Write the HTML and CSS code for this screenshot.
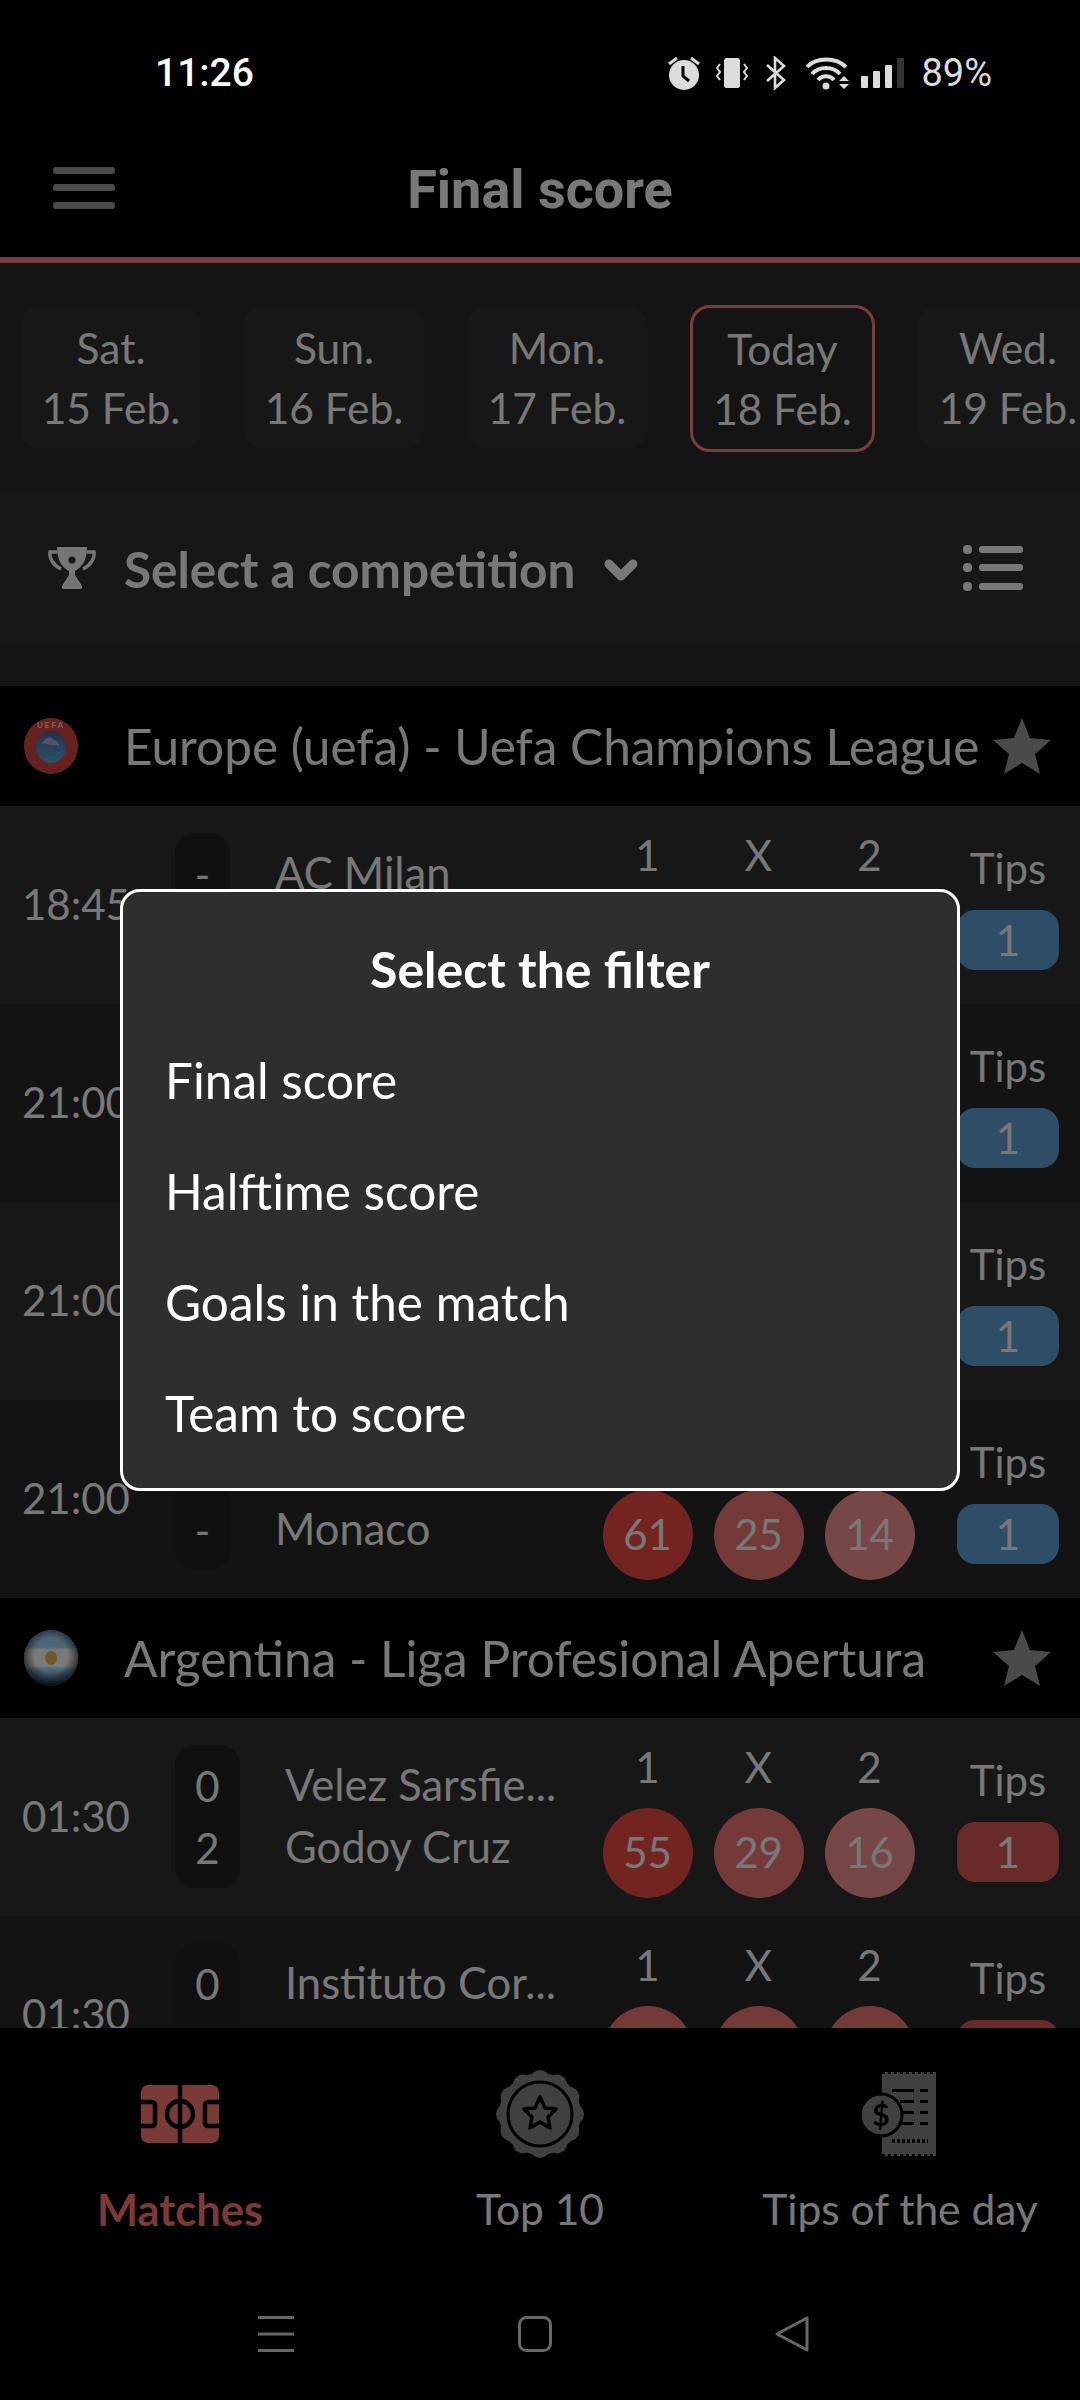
FILE: index.html
```html
<!DOCTYPE html>
<html lang="en">
<head>
    <meta charset="UTF-8">
    <meta name="viewport" content="width=device-width, initial-scale=1.0">
    <title>Final score</title>
    <link rel="stylesheet" href="styles.css">
</head>
<body>
<div class="screen">
    <!-- system status bar, stays above the scrim -->
    <div class="status-bar">
        <span class="clock">11:26</span>
        <div class="status-icons">
            <svg class="ic-alarm" width="32" height="34" viewBox="0 0 32 34"><path d="M1 8 9 2M31 8 23 2" stroke="#dcdcdc" stroke-width="3" fill="none"/><circle cx="16" cy="19" r="15" fill="#dcdcdc"/><path d="M15 10v10l6 5" stroke="#000" stroke-width="3" fill="none"/></svg>
            <svg class="ic-vibrate" width="32" height="30" viewBox="0 0 32 30"><rect x="8" y="0" width="16" height="30" rx="2.5" fill="#dcdcdc"/><path d="M4 6 1 10l3 4-3 4 3 4M28 6l3 4-3 4 3 4-3 4" stroke="#dcdcdc" stroke-width="2" fill="none"/></svg>
            <svg class="ic-bt" width="20" height="34" viewBox="0 0 20 34"><path d="M1 9 18 24 9 32V2l9 8L1 25" stroke="#dcdcdc" stroke-width="2.6" fill="none"/></svg>
            <svg class="ic-wifi" width="44" height="34" viewBox="0 0 44 34"><path d="M1 11C10 1 30 1 40 11M6 18C13 10 27 10 34 18M12 24c4-5 12-5 16 0" stroke="#dcdcdc" stroke-width="4" fill="none"/><circle cx="20" cy="30" r="3.5" fill="#dcdcdc"/><path d="M33 25l5-5 5 5zM33 28l5 5 5-5z" fill="#dcdcdc"/></svg>
            <svg class="ic-signal" width="44" height="30" viewBox="0 0 44 30"><rect x="0" y="18" width="7" height="12" rx="1" fill="#dcdcdc"/><rect x="12" y="13" width="7" height="17" rx="1" fill="#dcdcdc"/><rect x="24" y="7" width="7" height="23" rx="1" fill="#dcdcdc"/><rect x="36" y="0" width="7" height="30" rx="1" fill="#333"/></svg>
            <span class="battery">89%</span>
        </div>
    </div>

    <header class="app-bar">
        <svg class="burger" width="62" height="42" viewBox="0 0 62 42"><rect width="62" height="7" rx="3" fill="#949494"/><rect y="17" width="62" height="7" rx="3" fill="#949494"/><rect y="35" width="62" height="7" rx="3" fill="#949494"/></svg>
        <h1 class="app-title">Final score</h1>
    </header>

    <div class="dates">
        <div class="date">Sat.<br>15 Feb.</div>
        <div class="date">Sun.<br>16 Feb.</div>
        <div class="date">Mon.<br>17 Feb.</div>
        <div class="date today">Today<br>18 Feb.</div>
        <div class="date">Wed.<br>19 Feb.</div>
    </div>

    <div class="filter-bar">
        <svg class="trophy" width="48" height="42" viewBox="0 0 48 42"><path d="M9 0H39C39 14 34 20 27 24V28L34 39Q35 42 32 42H16Q13 42 14 39L21 28V24C14 20 9 14 9 0Z" fill="#ececec"/><circle cx="24" cy="13" r="3.5" fill="#2e2e2e"/><path d="M9 5H2C1 11 5 18 13 22M39 5H46C47 11 43 18 35 22" fill="none" stroke="#ececec" stroke-width="3.5"/></svg>
        <span class="filter-label">Select a competition</span>
        <svg class="chevron" width="34" height="24" viewBox="0 0 34 24"><path d="M5 6 17 18 29 6" fill="none" stroke="#f0f0f0" stroke-width="9" stroke-linecap="round" stroke-linejoin="round"/></svg>
        <svg class="list-icon" width="60" height="46" viewBox="0 0 60 46"><g fill="#f0f0f0"><rect y="0" width="9" height="9" rx="4"/><rect y="18" width="9" height="9" rx="4"/><rect y="37" width="9" height="9" rx="4"/><rect x="16" y="1" width="44" height="7" rx="3"/><rect x="16" y="19" width="44" height="7" rx="3"/><rect x="16" y="38" width="44" height="7" rx="3"/></g></svg>
    </div>

    <main class="matches">
        <section class="league">
            <svg class="league-logo" width="54" height="56" viewBox="0 0 54 56">
                <defs><linearGradient id="globe" x1="0" y1="0" x2="0" y2="1"><stop offset="0" stop-color="#4a5c98"/><stop offset="1" stop-color="#50a8d8"/></linearGradient></defs>
                <ellipse cx="27" cy="28" rx="27" ry="28" fill="#cc4440"/>
                <ellipse cx="27" cy="29" rx="15" ry="16" fill="url(#globe)"/>
                <path d="M17 26c4-6 9-8 12-5 3 2 7 3 6 7-3-2-6 0-9-1-3-1-5-2-9-1z" fill="#a0a8d0"/>
                <text class="uefa-text" x="27" y="10" text-anchor="middle">UEFA</text>
            </svg>
            <span class="league-name">Europe (uefa) - Uefa Champions League</span>
            <svg class="star" width="60" height="56" viewBox="0 0 60 56"><path d="M30 0l8 20 21 2-16 14 5 20-18-11-18 11 5-20L1 22l21-2z" fill="#949494"/></svg>
        </section>

        <article class="match">
            <div class="time">18:45</div>
            <div class="score narrow"><span>-</span></div>
            <div class="teams"><span>AC Milan</span></div>
            <div class="odds">
                <span>1</span><span>X</span><span>2</span>
            </div>
            <div class="tips"><span>Tips</span><b class="tip blue">1</b></div>
        </article>
        <article class="match alt">
            <div class="time">21:00</div>
            <div class="score-gap"></div>
            <div class="odds"></div>
            <div class="tips"><span>Tips</span><b class="tip blue">1</b></div>
        </article>
        <article class="match">
            <div class="time">21:00</div>
            <div class="score-gap"></div>
            <div class="odds"></div>
            <div class="tips"><span>Tips</span><b class="tip blue">1</b></div>
        </article>
        <article class="match alt">
            <div class="time">21:00</div>
            <div class="score narrow"><span></span><span>-</span></div>
            <div class="teams"><span>&nbsp;</span><span>Monaco</span></div>
            <div class="odds">
                <span>1</span><span>X</span><span>2</span>
                <i class="pct high">61</i><i class="pct mid">25</i><i class="pct low">14</i>
            </div>
            <div class="tips"><span>Tips</span><b class="tip blue">1</b></div>
        </article>

        <section class="league">
            <svg class="league-logo" width="54" height="56" viewBox="0 0 54 56">
                <defs>
                    <linearGradient id="arg" x1="0" y1="0" x2="0" y2="1"><stop offset="0" stop-color="#8fc4ee"/><stop offset=".3" stop-color="#9cccf0"/><stop offset=".36" stop-color="#f4f4f4"/><stop offset=".64" stop-color="#f4f4f4"/><stop offset=".7" stop-color="#9cccf0"/><stop offset="1" stop-color="#3a6a90"/></linearGradient>
                    <radialGradient id="shade" cx="50%" cy="45%" r="52%"><stop offset=".6" stop-color="#000" stop-opacity="0"/><stop offset="1" stop-color="#000" stop-opacity=".6"/></radialGradient>
                </defs>
                <ellipse cx="27" cy="28" rx="27" ry="28" fill="url(#arg)"/>
                <ellipse cx="27" cy="28" rx="6" ry="7" fill="#e0b050"/>
                <ellipse cx="27" cy="28" rx="27" ry="28" fill="url(#shade)"/>
            </svg>
            <span class="league-name">Argentina - Liga Profesional Apertura</span>
            <svg class="star" width="60" height="56" viewBox="0 0 60 56"><path d="M30 0l8 20 21 2-16 14 5 20-18-11-18 11 5-20L1 22l21-2z" fill="#949494"/></svg>
        </section>

        <article class="match">
            <div class="time">01:30</div>
            <div class="score"><span>0</span><span>2</span></div>
            <div class="teams"><span>Velez Sarsfie...</span><span>Godoy Cruz</span></div>
            <div class="odds">
                <span>1</span><span>X</span><span>2</span>
                <i class="pct high">55</i><i class="pct mid">29</i><i class="pct low">16</i>
            </div>
            <div class="tips"><span>Tips</span><b class="tip red">1</b></div>
        </article>
        <article class="match alt">
            <div class="time">01:30</div>
            <div class="score"><span>0</span></div>
            <div class="teams"><span>Instituto Cor...</span></div>
            <div class="odds">
                <span>1</span><span>X</span><span>2</span>
                <i class="pct mid"></i><i class="pct mid"></i><i class="pct mid"></i>
            </div>
            <div class="tips"><span>Tips</span><b class="tip red">1</b></div>
        </article>
    </main>

    <nav class="tabs">
        <div class="tab active">
            <div class="tab-icon">
                <svg width="78" height="58" viewBox="0 0 78 58"><rect width="78" height="58" rx="7" fill="#f47470"/><g fill="none" stroke="#000" stroke-width="4.5"><path d="M39 0v58"/><circle cx="39" cy="29" r="13"/><path d="M0 17h11a3 3 0 0 1 3 3v18a3 3 0 0 1-3 3H0M78 17H67a3 3 0 0 0-3 3v18a3 3 0 0 0 3 3h11"/></g></svg>
            </div>
            <span>Matches</span>
        </div>
        <div class="tab">
            <div class="tab-icon">
                <svg width="90" height="88" viewBox="0 0 90 88">
                    <g fill="#808080">
                        <circle cx="45" cy="44" r="41"/>
                        <circle cx="45" cy="10" r="10"/><circle cx="45" cy="10" r="10" transform="rotate(30 45 44)"/><circle cx="45" cy="10" r="10" transform="rotate(60 45 44)"/><circle cx="45" cy="10" r="10" transform="rotate(90 45 44)"/>
                        <circle cx="45" cy="10" r="10" transform="rotate(120 45 44)"/><circle cx="45" cy="10" r="10" transform="rotate(150 45 44)"/><circle cx="45" cy="10" r="10" transform="rotate(180 45 44)"/><circle cx="45" cy="10" r="10" transform="rotate(210 45 44)"/>
                        <circle cx="45" cy="10" r="10" transform="rotate(240 45 44)"/><circle cx="45" cy="10" r="10" transform="rotate(270 45 44)"/><circle cx="45" cy="10" r="10" transform="rotate(300 45 44)"/><circle cx="45" cy="10" r="10" transform="rotate(330 45 44)"/>
                    </g>
                    <circle cx="45" cy="44" r="32" fill="none" stroke="#000" stroke-width="3"/>
                    <path d="M45 27l5 11 11 1-8 8 2 11-10-6-10 6 2-11-8-8 11-1z" fill="none" stroke="#000" stroke-width="3.5" stroke-linejoin="round"/>
                </svg>
            </div>
            <span>Top 10</span>
        </div>
        <div class="tab">
            <div class="tab-icon">
                <svg width="76" height="84" viewBox="0 0 76 84">
                    <rect x="20" y="0" width="54" height="84" fill="#808080"/>
                    <path d="M20 1h54M20 83h54" stroke="#000" stroke-width="2" stroke-dasharray="3 3"/>
                    <g fill="#000"><rect x="30" y="17" width="22" height="3"/><rect x="58" y="17" width="8" height="3"/><rect x="38" y="28" width="14" height="3"/><rect x="58" y="28" width="8" height="3"/><rect x="38" y="39" width="14" height="3"/><rect x="58" y="39" width="8" height="3"/><rect x="38" y="50" width="14" height="3"/><rect x="58" y="50" width="8" height="3"/></g>
                    <path d="M30 69h36" stroke="#000" stroke-width="3.5" stroke-dasharray="3 2"/>
                    <circle cx="19" cy="43" r="21" fill="#808080" stroke="#000" stroke-width="3"/>
                    <text class="dollar" x="19" y="54" text-anchor="middle">$</text>
                </svg>
            </div>
            <span>Tips of the day</span>
        </div>
    </nav>

    <div class="sys-nav">
        <svg width="36" height="36" viewBox="0 0 36 36"><path d="M0 1.5h36M0 18h36M0 34.5h36" stroke="#cfcfcf" stroke-width="3"/></svg>
        <svg width="34" height="36" viewBox="0 0 34 36"><rect x="1.5" y="1.5" width="31" height="33" rx="7" fill="none" stroke="#cfcfcf" stroke-width="3"/></svg>
        <svg width="34" height="36" viewBox="0 0 34 36"><path d="M32 2v32L2 18z" fill="none" stroke="#cfcfcf" stroke-width="3" stroke-linejoin="round"/></svg>
    </div>

    <div class="scrim">
        <div class="dialog">
            <h2 class="dialog-title">Select the filter</h2>
            <div class="dialog-item">Final score</div>
            <div class="dialog-item">Halftime score</div>
            <div class="dialog-item">Goals in the match</div>
            <div class="dialog-item">Team to score</div>
        </div>
    </div>
</div>
</body>
</html>
```

FILE: styles.css
```css
* {
    box-sizing: border-box;
}
body {
    margin: 0;
    background: #000;
    font-family: Lato, "Liberation Sans", sans-serif;
    color: #f0f0f0;
}
.screen {
    position: relative;
    width: 1080px;
    height: 2400px;
    display: flex;
    flex-direction: column;
    overflow: hidden;
    background: #282828;
}

/* status bar */
.status-bar {
    position: relative;
    z-index: 3;
    height: 100px;
    flex: none;
    padding: 50px 88px 0 155px;
    display: flex;
    justify-content: space-between;
    align-items: flex-start;
    background: #000;
    font-family: Roboto, sans-serif;
}
.clock {
    font-size: 39px;
    font-weight: 500;
    line-height: 46px;
    color: #fff;
}
.status-icons {
    display: flex;
    align-items: center;
    height: 46px;
    color: #dcdcdc;
}
.ic-vibrate {
    margin-left: 16px;
}
.ic-bt {
    margin-left: 18px;
}
.ic-wifi {
    margin-left: 20px;
}
.ic-signal {
    margin-left: 11px;
}
.battery {
    margin-left: 16px;
    font-size: 38px;
    line-height: 46px;
}

/* app bar */
.app-bar {
    height: 163px;
    flex: none;
    padding-left: 53px;
    display: flex;
    align-items: flex-start;
    background: #000;
    border-bottom: 6px solid #f47878;
}
.burger {
    margin-top: 67px;
}
.app-title {
    flex: 1;
    margin: 60px 115px 0 0;
    font-family: Roboto, sans-serif;
    font-size: 54px;
    font-weight: 700;
    line-height: 60px;
    text-align: center;
    color: #f0f0f0;
}

/* date strip */
.dates {
    height: 230px;
    flex: none;
    padding: 44px 0 0 21px;
    display: flex;
    align-items: flex-start;
    gap: 43px;
    white-space: nowrap;
}
.date {
    width: 180px;
    flex: none;
    height: 141px;
    padding-top: 11px;
    border-radius: 18px;
    background: #2e2e2e;
    font-size: 42.5px;
    line-height: 60px;
    text-align: center;
}
.date.today {
    width: 185px;
    height: 147px;
    margin-top: -2px;
    border: 3px solid #f47878;
    border-radius: 20px;
    background: none;
}

/* competition filter */
.filter-bar {
    height: 150px;
    flex: none;
    padding: 0 57px 0 48px;
    display: flex;
    align-items: center;
    background: #2e2e2e;
}
.filter-label {
    margin-left: 28px;
    font-size: 49.5px;
    font-weight: 700;
    line-height: 60px;
    padding-top: 2px;
}
.chevron {
    margin: 4px 0 0 29px;
}
.list-icon {
    margin-left: auto;
}
.matches {
    flex: 1;
    min-height: 0;
    margin-top: 43px;
    overflow: hidden;
}

/* league header */
.league {
    height: 120px;
    padding: 0 28px 0 24px;
    display: flex;
    align-items: center;
    background: #000;
}
.league-name {
    flex: 1;
    margin-left: 46px;
    font-size: 49.5px;
    white-space: nowrap;
}
.uefa-text {
    font-family: Lato, sans-serif;
    font-size: 8px;
    font-weight: 700;
    letter-spacing: 2px;
    fill: #ffc0c0;
}

/* match row */
.match {
    height: 198px;
    padding-right: 21px;
    display: flex;
    align-items: flex-start;
    background: #2e2e2e;
    font-size: 40px;
}
.match.alt {
    background: #262626;
}
.time {
    width: 175px;
    height: 198px;
    padding-left: 22px;
    line-height: 196px;
    font-size: 42px;
}
.score {
    width: 65px;
    height: 143px;
    margin-top: 27px;
    padding-top: 10px;
    flex: none;
    border-radius: 20px;
    background: #202020;
    font-size: 42px;
    line-height: 62px;
    text-align: center;
}
.score span {
    display: block;
    height: 62px;
}
.score.narrow {
    width: 55px;
}
.score-gap {
    flex: 1;
}
.teams {
    flex: 1;
    min-width: 0;
    margin-left: 45px;
    padding-top: 35px;
    font-size: 43.5px;
    line-height: 62px;
    white-space: nowrap;
}
.teams span {
    display: block;
}
.odds {
    width: 333px;
    flex: none;
    padding-top: 22px;
    display: grid;
    grid-template-columns: repeat(3, 111px);
    justify-items: center;
    font-size: 42px;
    line-height: 54px;
}
.pct {
    width: 90px;
    height: 90px;
    margin-top: 14px;
    border-radius: 50%;
    font-style: normal;
    line-height: 88px;
    text-align: center;
}
.pct.high {
    background: #e64840;
}
.pct.mid {
    background: #e87474;
}
.pct.low {
    background: #ee8c8c;
}
.tips {
    width: 102px;
    flex: none;
    margin-left: 32px;
    padding-top: 35px;
    font-size: 42px;
    line-height: 54px;
    text-align: center;
}
.tips span {
    display: block;
}
.tip {
    display: block;
    height: 60px;
    margin-top: 15px;
    border-radius: 18px;
    font-weight: 400;
    line-height: 60px;
}
.tip.blue {
    background: #5a9ccc;
}
.tip.red {
    background: #d25654;
}

/* bottom tabs */
.tabs {
    height: 262px;
    flex: none;
    display: grid;
    grid-template-columns: repeat(3, 360px);
    background: #000;
    font-size: 42.5px;
    text-align: center;
}
.tab-icon {
    height: 130px;
    padding-top: 42px;
    display: flex;
    justify-content: center;
    align-items: center;
}
.tab-icon svg {
    display: block;
}
.tab span {
    display: block;
    margin-top: 25px;
    line-height: 52px;
}
.tab.active {
    color: #f47470;
    font-size: 43.5px;
    font-weight: 700;
}
.dollar {
    font-family: Lato, sans-serif;
    font-size: 30px;
    font-weight: 700;
    fill: #000;
}

/* system nav */
.sys-nav {
    height: 110px;
    flex: none;
    padding: 26px 271px 0 258px;
    display: flex;
    justify-content: space-between;
    align-items: flex-start;
    background: #000;
}

/* dialog */
.scrim {
    position: absolute;
    inset: 0;
    z-index: 2;
    display: flex;
    justify-content: center;
    align-items: center;
    padding-bottom: 20px;
    background: rgba(0, 0, 0, .5);
}
.dialog {
    width: 840px;
    height: 602px;
    padding: 47px 42px 0;
    border: 3px solid #fff;
    border-radius: 20px;
    background: #2e2e2e;
    color: #fff;
}
.dialog-title {
    margin: 0 0 26px;
    font-size: 50px;
    font-weight: 700;
    line-height: 60px;
    text-align: center;
}
.dialog-item {
    height: 111px;
    font-size: 49.5px;
    line-height: 111px;
}
```
